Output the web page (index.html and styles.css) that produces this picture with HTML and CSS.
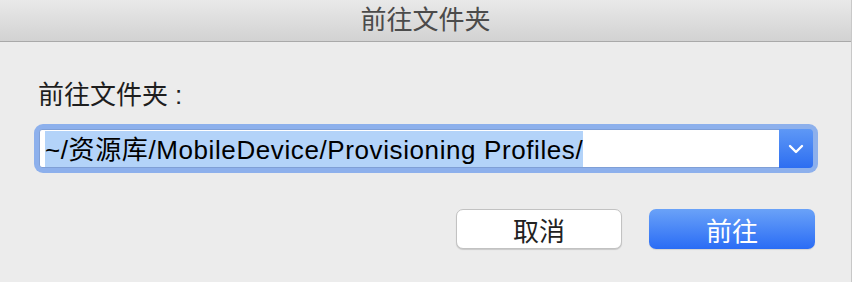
FILE: index.html
```html
<!DOCTYPE html>
<html lang="zh-CN">
<head>
    <meta charset="UTF-8">
    <meta name="viewport" content="width=device-width, initial-scale=1.0">
    <title>前往文件夹</title>
    <link rel="stylesheet" href="styles.css">
</head>
<body>

    <div class="titlebar">前往文件夹</div>

    <div class="content">
        <div class="label">前往文件夹<span class="colon">:</span></div>

        <div class="combo">
            <div class="field">
                <span class="path"><span class="sel">~/资源库/MobileDevice/Provisioning Profiles/</span></span>
                <div class="drop">
                    <svg width="16" height="10" viewBox="0 0 16 10"><path d="M2 2 L8 8 L14 2" fill="none" stroke="white" stroke-width="2.4" stroke-linecap="round" stroke-linejoin="round"/></svg>
                </div>
            </div>
        </div>

        <div class="buttons">
            <button class="btn cancel">取消</button>
            <button class="btn go">前往</button>
        </div>
    </div>

</body>
</html>
```

FILE: styles.css
```css
body { margin: 0; background: #ececec; font-family: "Liberation Sans", "Noto Sans CJK SC", sans-serif; height: 282px; overflow: hidden; border-right: 1px solid #c8c8c8; box-sizing: border-box; }
.titlebar { height: 41px; line-height: 41px; text-align: center; font-size: 26px; color: #4b4b4b; background: linear-gradient(#e9e9e9, #d2d2d2); border-bottom: 1px solid #a9a9a9; }
.content { display: flex; flex-direction: column; padding: 36px 33px 0 34px; }
.label { font-size: 26px; line-height: 34px; color: #1e1e1e; margin-left: 4px; }
.colon { margin-left: 7px; }
.combo { margin-top: 12px; height: 49px; box-sizing: border-box; padding: 5px; border-radius: 9px; background: #8db0ec; }
.field { display: flex; height: 39px; background: white; border: 1px solid #7f9fd6; box-sizing: border-box; border-radius: 3px 5px 5px 3px; }
.path { flex: 1; padding: 1px 0 0 5px; font-size: 26px; letter-spacing: 0.6px; line-height: 36px; color: black; white-space: nowrap; overflow: hidden; }
.sel { background: #b3d3f9; display: inline-block; padding-top: 1px; }
.drop { width: 34px; display: flex; align-items: center; justify-content: center; background: linear-gradient(#5e98f6, #2d6ef1); border-radius: 0 4px 4px 0; margin: -1px -1px -1px 0; }
.buttons { display: flex; justify-content: flex-end; gap: 27px; margin-top: 36px; margin-right: 3px; }
.btn { width: 166px; height: 40px; border-radius: 7px; font-family: "Liberation Sans", "Noto Sans CJK SC", sans-serif; font-size: 26px; padding: 0; cursor: pointer; }
.cancel { background: white; color: #222; border: 1px solid #c2c2c2; box-shadow: 0 1px 1px rgba(0,0,0,0.15); }
.go { background: linear-gradient(#6aa2f8, #2a6cf5); color: white; border: none; box-shadow: 0 1px 1px rgba(0,0,0,0.1); }
```
